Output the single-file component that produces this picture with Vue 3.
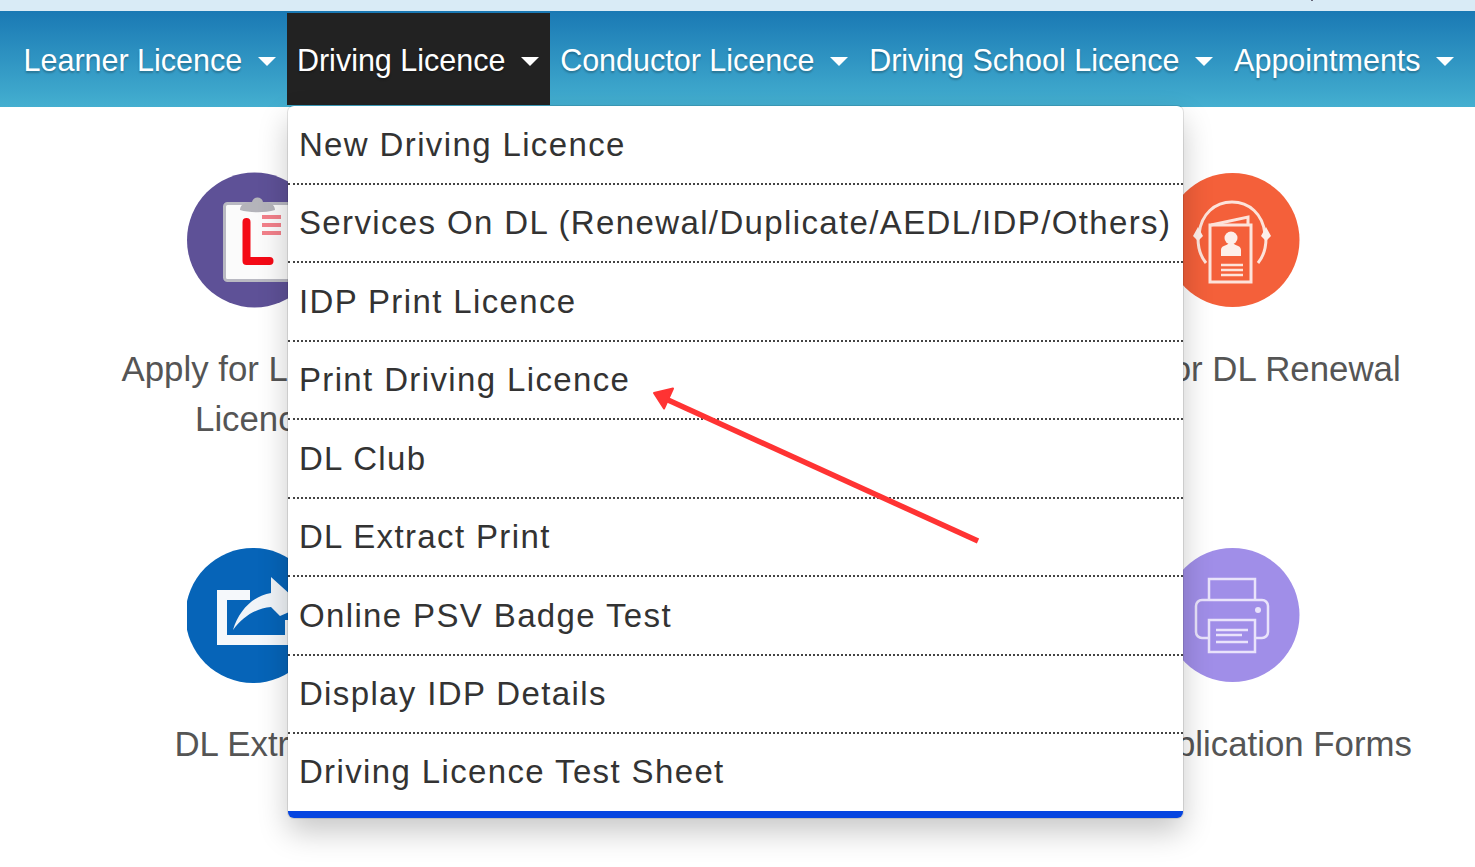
<script setup>
const navItems = [
  { label: 'Learner Licence' },
  { label: 'Driving Licence', open: true },
  { label: 'Conductor Licence' },
  { label: 'Driving School Licence' },
  { label: 'Appointments' },
]
const menuItems = [
  'New Driving Licence',
  'Services On DL (Renewal/Duplicate/AEDL/IDP/Others)',
  'IDP Print Licence',
  'Print Driving Licence',
  'DL Club',
  'DL Extract Print',
  'Online PSV Badge Test',
  'Display IDP Details',
  'Driving Licence Test Sheet',
]
</script>

<template>
  <div class="page">
    <div class="strip"><span class="speck"></span></div>
    <nav class="nav">
      <div v-for="item in navItems" :key="item.label" class="nav-item" :class="{ open: item.open }">
        <span>{{ item.label }}</span>
        <i class="caret"></i>
        <ul v-if="item.open" class="menu">
          <li v-for="m in menuItems" :key="m">{{ m }}</li>
        </ul>
      </div>
    </nav>

    <main class="tiles">
      <section class="tile">
        <svg class="icon" viewBox="0 0 136 136" width="136" height="136">
          <circle cx="67.5" cy="68" r="67.5" fill="#5e5197" />
          <rect x="37.5" y="31.5" width="72" height="77" rx="3" fill="#fbfbfb" stroke="#b9b9c2" stroke-width="3" />
          <path d="M53 38c0-6 6-8 12-8 1-6 10-6 11 0 6 0 12 2 12 8-10 3-25 3-35 0z" fill="#b4b4ba" />
          <path d="M59.5 50v39h23" fill="none" stroke="#f40a16" stroke-width="8" stroke-linecap="round" stroke-linejoin="round" />
          <path d="M75 45h19M75 53h19M75 61h19" stroke="#f2808a" stroke-width="4" />
        </svg>
        <p class="label">Apply for Learner Licence</p>
      </section>

      <section class="tile">
        <svg class="icon" viewBox="0 0 136 136" width="136" height="136">
          <circle cx="67.5" cy="68" r="67" fill="#f4603a" />
          <g fill="none" stroke="#fde3da" stroke-width="3">
            <path d="M45 53h41v57H45z" />
            <path d="M46 53l37-8v8" />
            <path d="M34 62C36 42 50 30 67 30s31 12 33 32" />
            <path d="M33 66c0 11 3 19 8 25M101 66c0 11-3 19-8 25" />
            <path d="M56 93h22M56 98h22M56 103h22" stroke-width="2.5" />
          </g>
          <circle cx="66" cy="66" r="6.5" fill="#fdeee9" />
          <path d="M56 84v-6c0-4 4-4 7-6h6c3 2 7 2 7 6v6z" fill="#fdeee9" />
          <path d="M33 55l-5 9 5 5 5-5zM101 55l-5 9 5 5 5-5z" fill="#fdeee9" />
        </svg>
        <p class="label">Apply for DL Renewal</p>
      </section>

      <section class="tile">
        <svg class="icon" viewBox="0 0 136 136" width="136" height="136">
          <circle cx="66" cy="67.5" r="67.5" fill="#0664b8" />
          <path d="M63 47H35v45h68V72" fill="none" stroke="#f5f8fb" stroke-width="10" />
          <path d="M46 82C52 62 66 48 84 45V29l32 29-23 10-9-9C70 60 56 68 46 82z" fill="#f0f4f8" />
        </svg>
        <p class="label">DL Extract</p>
      </section>

      <section class="tile">
        <svg class="icon" viewBox="0 0 136 136" width="136" height="136">
          <circle cx="67.5" cy="67" r="67" fill="#a08ee8" />
          <g fill="none" stroke="#e9e3fb" stroke-width="2.5">
            <path d="M44 52V31h46v21" />
            <path d="M44 90H37a6 6 0 0 1-6-6V58a6 6 0 0 1 6-6h60a6 6 0 0 1 6 6v26a6 6 0 0 1-6 6h-7" />
            <path d="M44 72h46v32H44z" />
            <path d="M51 82h32M51 87h26M51 94h32" />
          </g>
          <circle cx="93" cy="62" r="3" fill="#e9e3fb" />
        </svg>
        <p class="label">Print Application Forms</p>
      </section>
    </main>

    <svg class="annotation" viewBox="0 0 1475 867" width="1475" height="867">
      <path d="M978 541L668 400" stroke="#ff3333" stroke-width="5.5" fill="none" />
      <path d="M654 393L673 388.5L664 408.5Z" fill="#ff3333" stroke="#ff3333" stroke-width="2" stroke-linejoin="round" />
    </svg>
  </div>
</template>

<style>
html, body { margin: 0; background: #fff; overflow: hidden; }
</style>

<style scoped>
.page {
  position: relative;
  width: 1475px;
  height: 867px;
  overflow: hidden;
  font-family: "Liberation Sans", Arial, sans-serif;
  background: #fff;
}
.strip {
  position: relative;
  height: 11px;
  background: #d9ebf6;
}
.speck {
  position: absolute;
  left: 1311px;
  top: 0;
  width: 2px;
  height: 1px;
  background: #667;
}
.nav {
  display: flex;
  align-items: center;
  height: 96px;
  padding-left: 13.5px;
  background: linear-gradient(to bottom, #1a79b4, #44afd0);
}
.nav-item {
  position: relative;
  display: flex;
  align-items: center;
  box-sizing: border-box;
  height: 92px;
  padding: 2px 11px 0 10px;
  font-size: 30.5px;
  color: #fff;
  text-shadow: 0 2px 2px rgba(0, 0, 0, 0.25);
}
.nav-item.open {
  background: #222;
}
.caret {
  width: 0;
  height: 0;
  margin-left: 15.7px;
  margin-top: 2px;
  border-left: 9px solid transparent;
  border-right: 9px solid transparent;
  border-top: 9px solid #fff;
}
.menu {
  position: absolute;
  top: 93px;
  left: 1.5px;
  z-index: 2;
  box-sizing: border-box;
  width: 895px;
  margin: 0;
  padding: 0;
  list-style: none;
  background: #fff;
  border-radius: 6px;
  border-bottom: 7px solid #0645e0;
  box-shadow: 0 0 0 1px rgba(0, 0, 0, 0.1), 0 14px 30px rgba(0, 0, 0, 0.22);
  font-size: 33px;
  letter-spacing: 1.37px;
  color: #333;
  text-shadow: none;
}
.menu li {
  box-sizing: border-box;
  display: flex;
  align-items: center;
  height: 78.5px;
  padding: 1px 0 0 10.5px;
  border-bottom: 2px dotted #444;
  white-space: nowrap;
}
.menu li:last-child {
  height: 77px;
  padding-top: 0;
  padding-bottom: 2px;
  border-bottom: 0;
}
.tiles {
  display: grid;
  grid-template-columns: 360px 360px;
  justify-content: space-between;
  row-gap: 104px;
  padding: 65px 62px 0 75px;
}
.tile {
  display: flex;
  flex-direction: column;
  align-items: center;
}
.tile:nth-child(n + 3) .label {
  margin-top: 35px;
}
.icon {
  display: block;
}
.label {
  margin: 36px 0 0;
  font-size: 34.8px;
  line-height: 50px;
  color: #555;
  text-align: center;
}
.annotation {
  position: absolute;
  left: 0;
  top: 0;
  z-index: 3;
  pointer-events: none;
}
</style>
